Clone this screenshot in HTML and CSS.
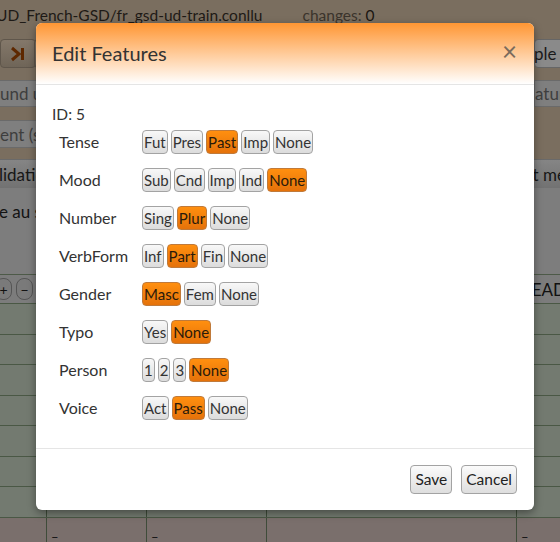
FILE: index.html
```html
<!DOCTYPE html>
<html>
<head>
<meta charset="utf-8">
<link rel="stylesheet" href="styles.css">
</head>
<body>
<div class="page">
  <div class="titlebar">
    <span class="filename">UD_French-GSD/fr_gsd-ud-train.conllu</span>
    <span class="changes">changes: <b>0</b></span>
  </div>
  <div class="toolbar">
    <div class="tbtn">
      <svg width="16" height="16" viewBox="0 0 16 16"><path d="M2 2 L9 8 L2 14" fill="none" stroke="#5e2800" stroke-width="3"/><rect x="11" y="2" width="3" height="12" fill="#5e2800"/></svg>
    </div>
    <div class="tbtn small"></div>
    <div class="spacer"></div>
    <div class="rbtn">ple s</div>
  </div>
  <div class="inrow">
    <div class="inbox left">und up</div>
    <div class="spacer"></div>
    <div class="inbox right">ature</div>
  </div>
  <div class="inrow second">
    <div class="inbox left">ent (s</div>
  </div>
  <div class="bar">
    <span class="bleft">lidatio</span>
    <span class="bright">it me</span>
  </div>
  <div class="grayarea">
    <span class="sent">e au s</span>
  </div>
  <div class="headrow">
    <div class="pm">+</div>
    <div class="pm">&minus;</div>
    <div class="spacer"></div>
    <span class="head">EAD</span>
  </div>
  <div class="grow cols"><i class="c1"></i><i class="c2"></i><i class="c3"></i><i class="c4"></i></div>
  <div class="grow cols"><i class="c1"></i><i class="c2"></i><i class="c3"></i><i class="c4"></i></div>
  <div class="grow cols"><i class="c1"></i><i class="c2"></i><i class="c3"></i><i class="c4"></i></div>
  <div class="grow cols"><i class="c1"></i><i class="c2"></i><i class="c3"></i><i class="c4"></i></div>
  <div class="grow cols"><i class="c1"></i><i class="c2"></i><i class="c3"></i><i class="c4"></i></div>
  <div class="grow cols"><i class="c1"></i><i class="c2"></i><i class="c3"></i><i class="c4"></i></div>
  <div class="grow cols"><i class="c1"></i><i class="c2"></i><i class="c3"></i><i class="c4"></i></div>
  <div class="brow cols">
    <i class="c1"></i><i class="c2"></i><i class="c3"></i><i class="c4"></i>
    <span class="d d1">&ndash;</span><span class="d d2">&ndash;</span><span class="d d4">&ndash;</span>
  </div>
</div>

<div class="modal">
  <div class="mhead">
    <span class="mtitle">Edit Features</span>
    <span class="close">&times;</span>
  </div>
  <div class="mbody">
    <div class="idline">ID: 5</div>
    <div class="frow"><span class="flabel">Tense</span><div class="opts"><span class="ob">Fut</span><span class="ob">Pres</span><span class="ob on">Past</span><span class="ob">Imp</span><span class="ob">None</span></div></div>
    <div class="frow"><span class="flabel">Mood</span><div class="opts"><span class="ob">Sub</span><span class="ob">Cnd</span><span class="ob">Imp</span><span class="ob">Ind</span><span class="ob on">None</span></div></div>
    <div class="frow"><span class="flabel">Number</span><div class="opts"><span class="ob">Sing</span><span class="ob on">Plur</span><span class="ob">None</span></div></div>
    <div class="frow"><span class="flabel">VerbForm</span><div class="opts"><span class="ob">Inf</span><span class="ob on">Part</span><span class="ob">Fin</span><span class="ob">None</span></div></div>
    <div class="frow"><span class="flabel">Gender</span><div class="opts"><span class="ob on">Masc</span><span class="ob">Fem</span><span class="ob">None</span></div></div>
    <div class="frow"><span class="flabel">Typo</span><div class="opts"><span class="ob">Yes</span><span class="ob on">None</span></div></div>
    <div class="frow"><span class="flabel">Person</span><div class="opts"><span class="ob">1</span><span class="ob">2</span><span class="ob">3</span><span class="ob on">None</span></div></div>
    <div class="frow"><span class="flabel">Voice</span><div class="opts"><span class="ob">Act</span><span class="ob on">Pass</span><span class="ob">None</span></div></div>
  </div>
  <div class="mfoot">
    <span class="fbtn">Save</span>
    <span class="fbtn">Cancel</span>
  </div>
</div>
</body>
</html>
```
FILE: styles.css
```css
html, body { margin: 0; padding: 0; }
body {
  width: 560px; height: 542px; overflow: hidden; position: relative;
  font-family: Lato, "Open Sans", sans-serif;
  background: #7a6e5f;
}
.page { width: 560px; height: 542px; overflow: hidden; background: #7a6e5f; }
.spacer { flex: 1; }

.titlebar { height: 39px; display: flex; align-items: flex-start; white-space: nowrap; font-size: 15.5px; line-height: 20px; padding-top: 5px; box-sizing: border-box; }
.filename { margin-left: -4px; color: #1e1a16; }
.changes { margin-left: 40px; color: #3b342c; }
.changes b { font-weight: normal; color: #1a1612; }

.toolbar { height: 29px; display: flex; align-items: stretch; }
.tbtn {
  width: 36px; margin-left: 0; box-sizing: border-box;
  border: 1px solid #5f564b; border-radius: 4px;
  background: linear-gradient(#84786a, #6f6558);
  display: flex; align-items: center; justify-content: center;
}
.tbtn.small { width: 20px; margin-left: -2px; }
.rbtn {
  width: 40px; box-sizing: border-box; border: 1px solid #666; border-radius: 4px 0 0 4px;
  background: #8a8a8a; color: #1a1a1a; font-size: 17px;
  display: flex; align-items: center; padding-left: 0; white-space: nowrap; overflow: hidden;
  text-indent: -1px; margin-right: -14px;
}
.inrow { height: 27px; display: flex; margin-top: 12px; }
.inrow.second { margin-top: 13px; height: 28px; }
.inbox {
  box-sizing: border-box; background: #7f7f7f; border: 1px solid #6a6a6a;
  color: #3e3e3e; font-size: 17px; display: flex; align-items: center; white-space: nowrap; overflow: hidden;
}
.inbox.left { width: 70px; margin-left: -10px; padding-left: 9px; }
.inbox.right { width: 30px; margin-right: -4px; padding-left: 0; }

.bar {
  margin-top: 11px; height: 29px; display: flex; align-items: center; justify-content: space-between;
  background: linear-gradient(#858585, #727272); border-top: 1px solid #6a6a6a; box-sizing: border-box;
  font-size: 17px; color: #161616; white-space: nowrap; overflow: hidden;
}
.bleft { margin-left: -1px; }
.bright { margin-right: -6px; }

.grayarea { height: 86px; background: #7d7d7d; position: relative; font-size: 17px; color: #131313; }
.sent { display: block; padding-top: 13px; margin-left: -1px; }

.headrow {
  height: 29px; display: flex; align-items: center; background: #7c7c7c;
  border-top: 1px solid #4d5a48; box-sizing: border-box;
}
.pm {
  width: 17px; height: 22px; box-sizing: border-box; border: 1px solid #555; border-radius: 8px;
  display: flex; align-items: center; justify-content: center; font-size: 14px; color: #111;
  background: #7a7a7a; margin-left: 4px;
}
.pm:first-child { margin-left: -5px; }
.head { font-size: 17px; color: #111; margin-right: -6px; }

.grow { height: 30.5px; background: #737a70; border-top: 1px solid #4a5845; box-sizing: border-box; position: relative; }
.brow { height: 26px; background: #7a6f6c; border-top: 1px solid #4a5845; box-sizing: border-box; position: relative; }
.cols i { position: absolute; top: 0; bottom: 0; width: 1px; background: #3f4c3a; }
.c1 { left: 46px; } .c2 { left: 146px; } .c3 { left: 266px; } .c4 { left: 516px; }
.d { position: absolute; top: 11px; font-size: 13px; color: #111; line-height: 16px; }
.d1 { left: 51px; } .d2 { left: 151px; } .d4 { left: 521px; }

/* modal */
.modal {
  position: absolute; left: 36px; top: 23px; width: 498px; height: 487px;
  background: #fff; border-radius: 6px; overflow: hidden;
  box-shadow: 0 3px 9px rgba(0,0,0,0.4);
  display: flex; flex-direction: column;
}
.mhead {
  height: 62px; flex: none; box-sizing: border-box; border-bottom: 1px solid #e5e5e5;
  background: linear-gradient(#ff9633, #ffffff);
  display: flex; align-items: center; justify-content: space-between; padding: 0 17px 0 16px;
}
.mtitle { font-size: 20px; color: #333; margin-top: -2px; }
.close { font-size: 26px; color: #7a6b5c; line-height: 1; margin-top: -6px; }
.mbody { padding: 19px 16px 0 16px; height: 364px; flex: none; box-sizing: border-box; border-bottom: 1px solid #e5e5e5; }
.idline { font-size: 15.5px; color: #333; line-height: 20px; height: 20px; margin-bottom: 6px; }
.frow { display: flex; align-items: center; height: 24px; margin-bottom: 14px; }
.flabel { padding-left: 7px; font-size: 16px; line-height: 20px; color: #333; flex: none; box-sizing: border-box; width: 90px; margin-top: -1px; }
.opts { display: flex; gap: 3px; }
.ob {
  height: 24px; box-sizing: border-box; padding: 0 1px; font-size: 15px; line-height: 22px;
  border: 1px solid #a3a3a3; border-radius: 4px; color: #333;
  background: linear-gradient(#f8f8f8, #dcdcdc);
}
.ob.on { background: linear-gradient(#ff8f0f, #e5720a); border-color: #c07a3a; color: #2a1a0a; }
.mfoot { flex: 1; display: flex; justify-content: flex-end; align-items: flex-start; padding: 16px 17px 0 0; gap: 9px; }
.fbtn {
  height: 29px; box-sizing: border-box; padding: 0 4px; font-size: 15.5px; line-height: 27px;
  border: 1px solid #a3a3a3; border-radius: 4px; color: #222;
  background: linear-gradient(#fbfbfb, #dedede);
}
```
